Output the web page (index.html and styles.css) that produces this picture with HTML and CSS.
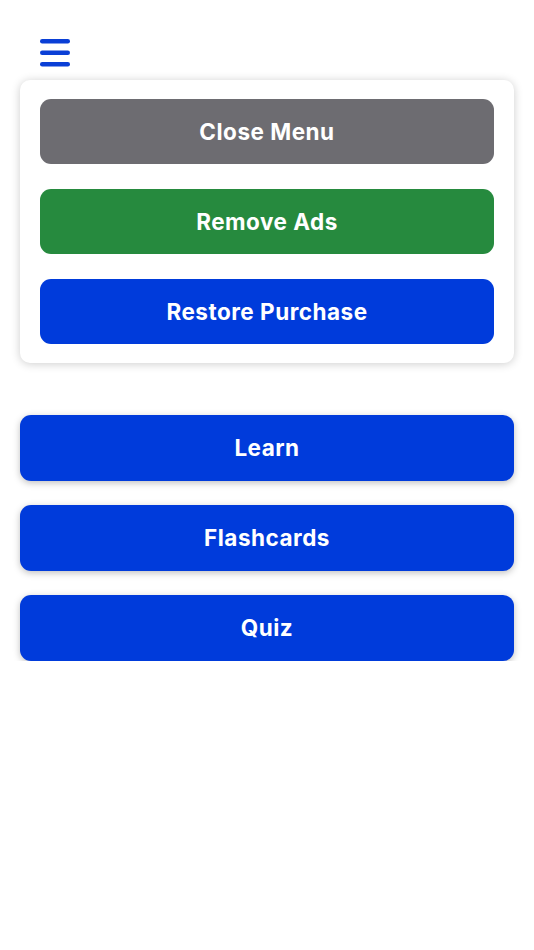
FILE: index.html
```html
<!DOCTYPE html>
<html>
<head>
<meta charset="utf-8">
<link rel="stylesheet" href="styles.css">
</head>
<body>
<div class="page">
  <button class="menu-toggle" aria-label="Menu">
    <svg width="30" height="28" viewBox="0 0 30 28">
      <rect x="0" y="0" width="30" height="4.4" rx="2.2" fill="#0a3fd6"/>
      <rect x="0" y="11.6" width="30" height="4.4" rx="2.2" fill="#0a3fd6"/>
      <rect x="0" y="23" width="30" height="4.4" rx="2.2" fill="#0a3fd6"/>
    </svg>
  </button>
  <div class="menu-card">
    <button class="btn btn-menu btn-gray">Close Menu</button>
    <button class="btn btn-menu btn-green">Remove Ads</button>
    <button class="btn btn-menu btn-blue">Restore Purchase</button>
  </div>
  <div class="main-list">
    <button class="btn btn-blue btn-shadow">Learn</button>
    <button class="btn btn-blue btn-shadow">Flashcards</button>
    <button class="btn btn-blue btn-shadow">Quiz</button>
  </div>
</div>
</body>
</html>
```
FILE: styles.css
```css
html, body {
  margin: 0;
  padding: 0;
  background: #ffffff;
}
.page {
  width: 534px;
  padding: 39px 20px 0 20px;
  box-sizing: border-box;
  font-family: Inter, "Liberation Sans", sans-serif;
}
.menu-toggle {
  display: block;
  margin: 0 0 13px 20px;
  padding: 0;
  border: none;
  background: none;
  height: 28px;
  width: 30px;
}
.menu-toggle svg {
  display: block;
}
.menu-card {
  background: #ffffff;
  border-radius: 10px;
  box-shadow: 0 1px 10px rgba(0, 0, 0, 0.2);
  padding: 19px 20px 19px 20px;
  display: flex;
  flex-direction: column;
  gap: 25px;
}
.btn {
  display: flex;
  align-items: center;
  justify-content: center;
  width: 100%;
  height: 66px;
  border: none;
  border-radius: 11px;
  color: #ffffff;
  font-family: Inter, "Liberation Sans", sans-serif;
  font-weight: 700;
  font-size: 22.5px;
  letter-spacing: 0.5px;
  padding: 0 0 1px 0;
}
.btn-menu {
  height: 65px;
}
.btn-gray {
  background: #6d6c71;
}
.btn-green {
  background: #268a3e;
}
.btn-blue {
  background: #003bdb;
}
.btn-shadow {
  box-shadow: 0 2px 7px rgba(0, 0, 0, 0.25);
}
.main-list {
  margin-top: 52px;
  display: flex;
  flex-direction: column;
  gap: 24px;
}
```
